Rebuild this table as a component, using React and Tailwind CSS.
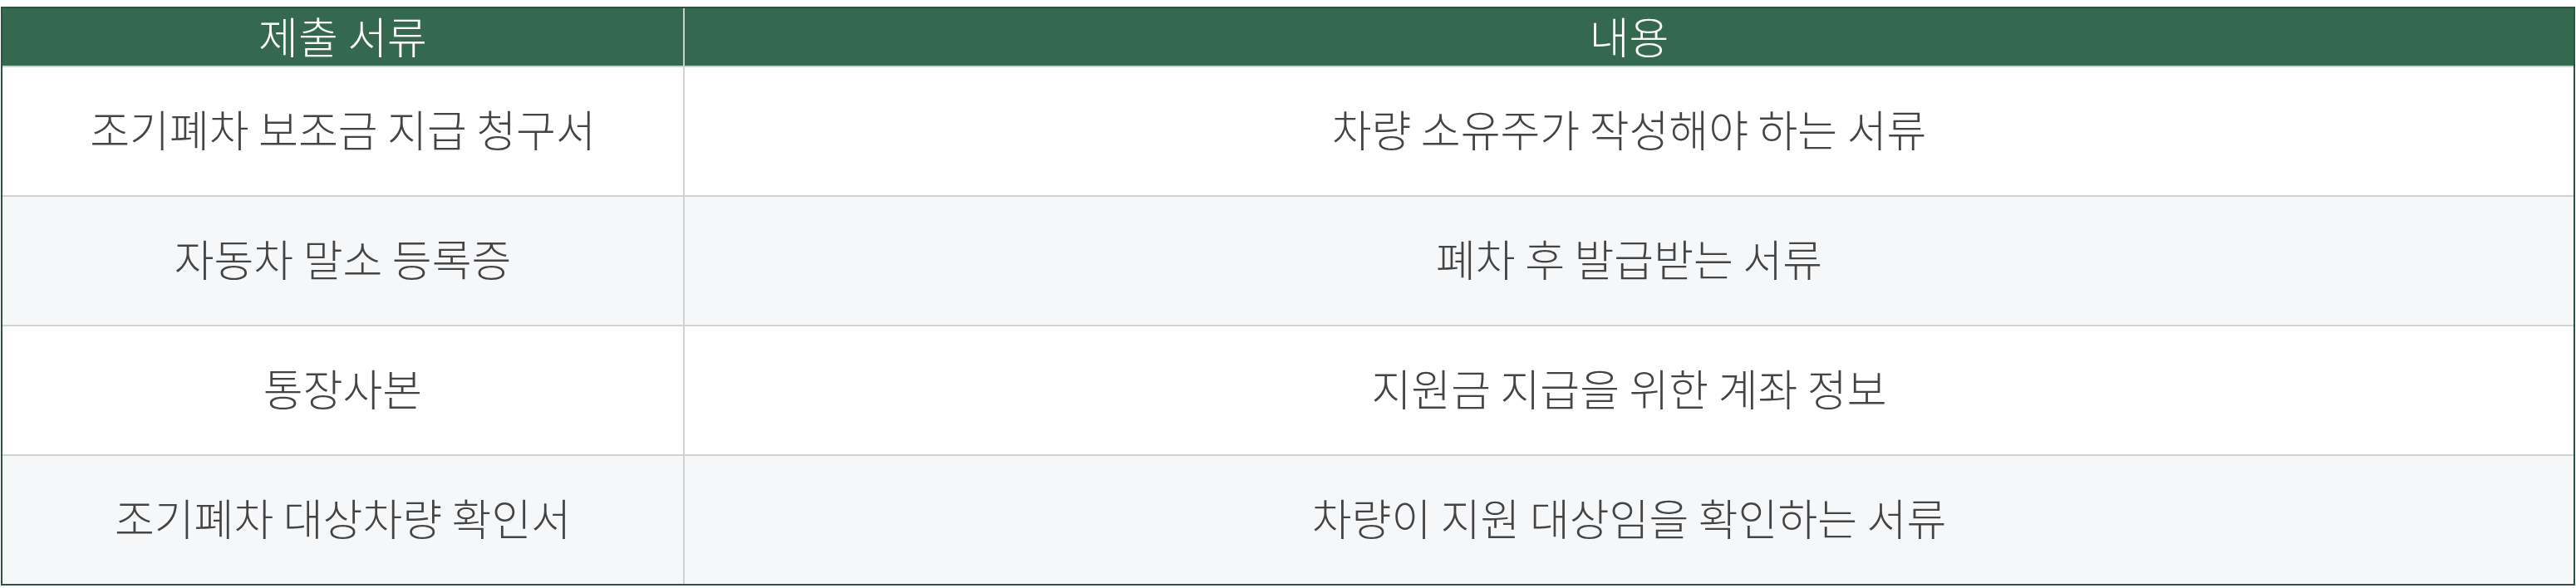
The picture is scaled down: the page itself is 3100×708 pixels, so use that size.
import React from "react";

const rows = [
  ["조기폐차 보조금 지급 청구서", "차량 소유주가 작성해야 하는 서류"],
  ["자동차 말소 등록증", "폐차 후 발급받는 서류"],
  ["통장사본", "지원금 지급을 위한 계좌 정보"],
  ["조기폐차 대상차량 확인서", "차량이 지원 대상임을 확인하는 서류"],
];

export default function App() {
  return (
    <div
      className="pt-[8px] px-[1px] bg-white"
      style={{ fontFamily: '"Noto Sans CJK KR", "Noto Sans", sans-serif' }}
    >
      <div className="border-2 border-[#2e5345]">
        <div className="grid grid-cols-[821px_1fr] bg-[#35694f] border-b-2 border-[#cfd2d0] text-white text-[52px] font-light leading-none">
          <div className="h-[69px] pb-[4px] flex items-center justify-center border-r-2 border-[#c9d3ce]">제출 서류</div>
          <div className="h-[69px] pb-[4px] flex items-center justify-center">내용</div>
        </div>
        {rows.map(([a, b], i) => (
          <div
            key={i}
            className={
              "grid grid-cols-[821px_1fr] text-[#444444] text-[52px] font-light leading-none " +
              (i % 2 === 1 ? "bg-[#f6f7f9] " : "bg-white ") +
              (i < rows.length - 1 ? "border-b-2 border-[#d2d2d2]" : "")
            }
          >
            <div className="h-[154px] pb-[6px] flex items-center justify-center border-r-2 border-[#d2d2d2]">{a}</div>
            <div className="h-[154px] pb-[6px] flex items-center justify-center">{b}</div>
          </div>
        ))}
      </div>
    </div>
  );
}
